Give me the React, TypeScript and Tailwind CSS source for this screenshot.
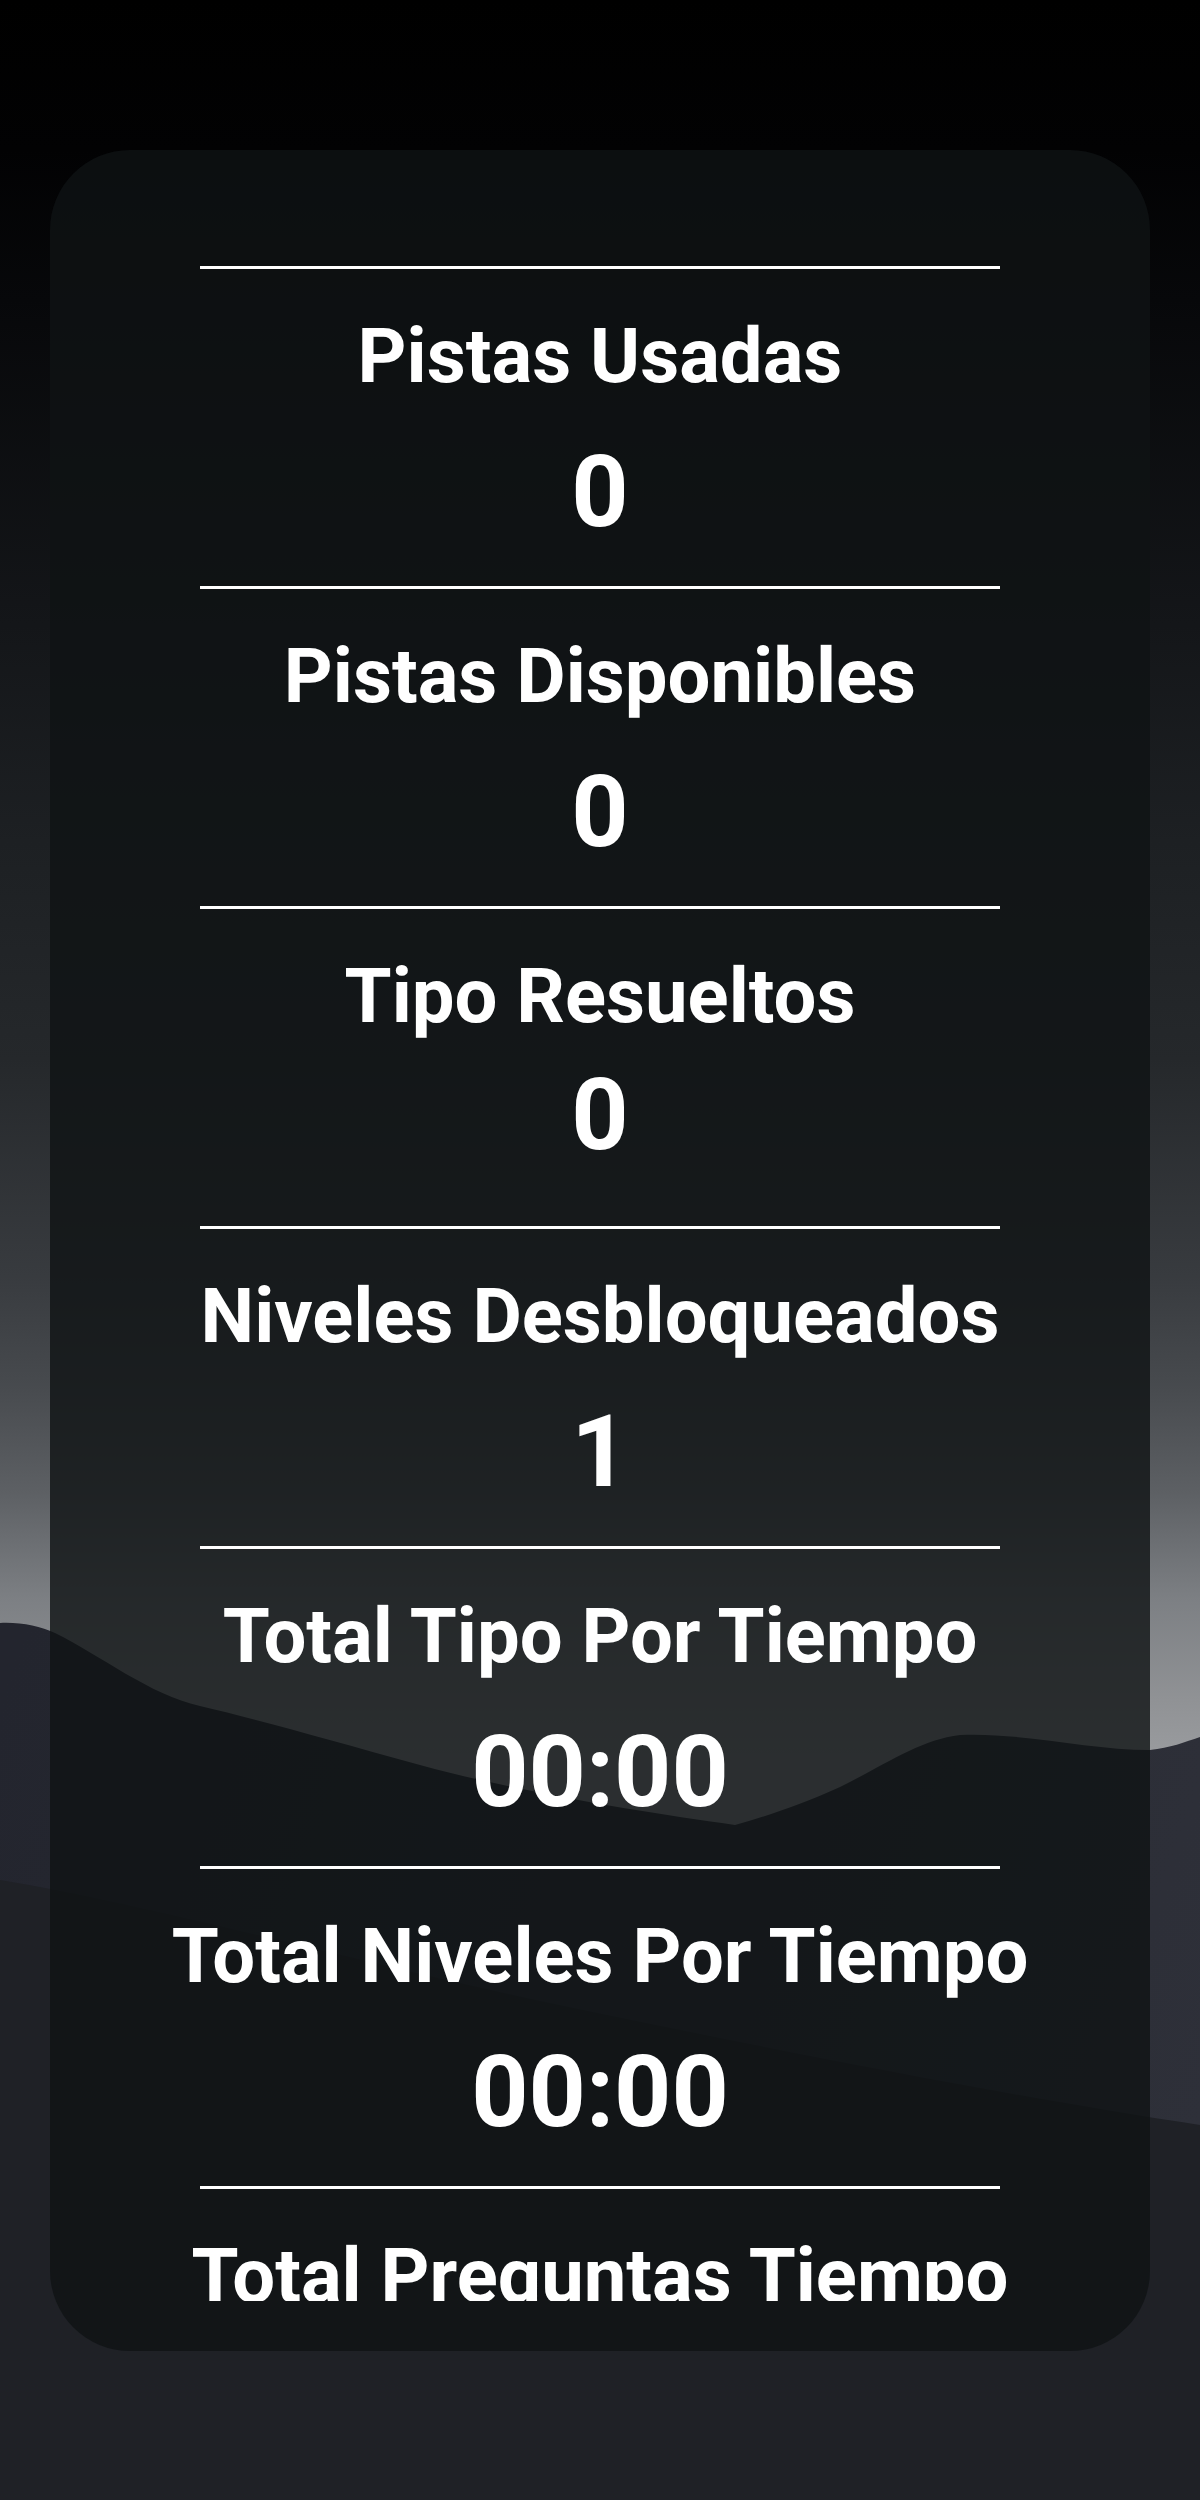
import React from "react";

type Stat = {
  label: string;
  value: string;
  tight?: boolean;
};

const stats: Stat[] = [
  { label: "Pistas Usadas", value: "0" },
  { label: "Pistas Disponibles", value: "0" },
  { label: "Tipo Resueltos", value: "0", tight: true },
  { label: "Niveles Desbloqueados", value: "1" },
  { label: "Total Tipo Por Tiempo", value: "00:00" },
  { label: "Total Niveles Por Tiempo", value: "00:00" },
  { label: "Total Preguntas Tiempo", value: "00:00" },
];

function Hills() {
  return (
    <svg
      className="absolute inset-0 h-[2500px] w-[1200px]"
      viewBox="0 0 1200 2500"
      aria-hidden="true"
    >
      <defs>
        <linearGradient id="hillBack" x1="0" y1="1700" x2="1200" y2="2130" gradientUnits="userSpaceOnUse">
          <stop offset="0" stopColor="#23252e" />
          <stop offset="1" stopColor="#2e3039" />
        </linearGradient>
      </defs>
      <path
        fill="url(#hillBack)"
        d="M0,1623 C20,1622 40,1626 55,1633 C100,1655 150,1695 200,1706 C260,1720 330,1740 420,1765 C520,1792 640,1812 735,1825 C770,1815 800,1805 840,1787 C890,1762 920,1740 960,1735 C1020,1732 1090,1750 1150,1750 C1170,1748 1185,1742 1200,1737 L1200,2500 L0,2500 Z"
      />
      <path
        fill="#1f2126"
        d="M0,1880 C150,1905 350,1960 535,2000 C750,2045 1000,2095 1200,2125 L1200,2500 L0,2500 Z"
      />
    </svg>
  );
}

function StatRow({ stat }: { stat: Stat }) {
  return (
    <div className={`flex flex-col items-center ${stat.tight ? "pb-[51px]" : "pb-[34px]"}`}>
      <div className="h-[3px] w-[800px] bg-white" />
      <p className="mt-[42px] whitespace-nowrap text-[76px] leading-[90px] font-bold">
        {stat.label}
      </p>
      <p
        className={`${stat.tight ? "mt-[14px]" : "mt-[31px]"} whitespace-nowrap text-[100px] leading-[120px] font-bold`}
      >
        {stat.value}
      </p>
    </div>
  );
}

export default function App() {
  return (
    <div className="relative min-h-[2500px] w-full overflow-hidden bg-[linear-gradient(to_bottom,#000000_0px,#020203_150px,#07080a_300px,#141619_625px,#1d2023_842px,#25282b_1059px,#383b3f_1276px,#474a4e_1385px,#5d6064_1493px,#7d8084_1601px,#909295_1700px,#9a9c9f_1760px,#9a9c9f_2500px)] font-['Roboto',sans-serif] text-white">
      <Hills />

      <div className="relative px-[50px] pt-[150px]">
        {/* Tarjeta de estadísticas */}
        <div className="rounded-[80px] bg-[#0f1314]/80 p-[50px]">
          <div className="h-[2101px] overflow-hidden pt-[66px]">
            {stats.map((s) => (
              <StatRow key={s.label} stat={s} />
            ))}
          </div>
        </div>
      </div>
    </div>
  );
}
